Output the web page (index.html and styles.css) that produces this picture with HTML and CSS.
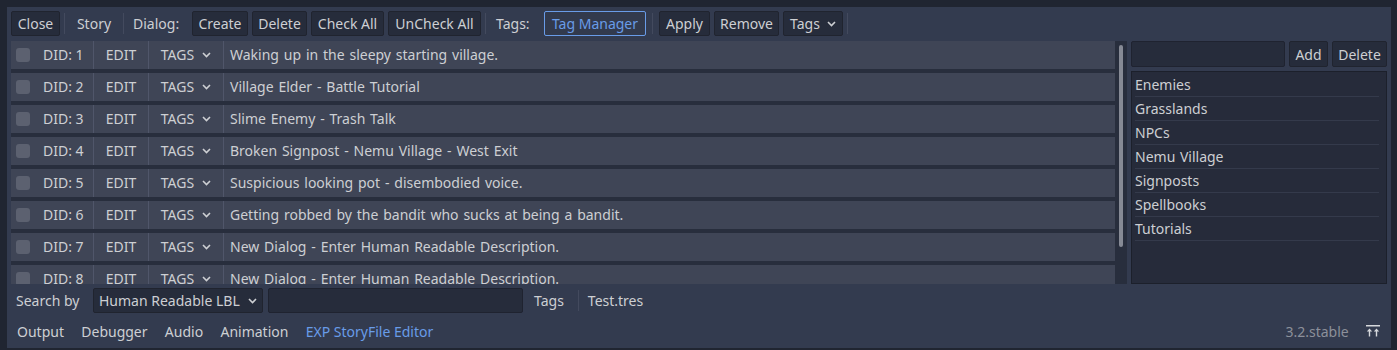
FILE: index.html
```html
<!DOCTYPE html>
<html lang="en">
<head>
    <meta charset="UTF-8">
    <title>EXP StoryFile Editor</title>
    <link rel="stylesheet" href="styles.css">
</head>
<body>
    <div class="panel">
        <div class="toolbar">
            <span class="btn btn-close">Close</span>
            <span class="vsep"></span>
            <span class="flat">Story</span>
            <span class="vsep"></span>
            <span class="lbl lbl-dialog">Dialog:</span>
            <span class="btn btn-create">Create</span>
            <span class="btn btn-delete">Delete</span>
            <span class="btn btn-check">Check All</span>
            <span class="btn btn-uncheck">UnCheck All</span>
            <span class="vsep"></span>
            <span class="lbl lbl-tags">Tags:</span>
            <span class="btn btn-manager active">Tag Manager</span>
            <span class="vsep vsep-wide"></span>
            <span class="btn btn-apply">Apply</span>
            <span class="btn btn-remove">Remove</span>
            <span class="btn btn-tags">Tags <svg class="chev" width="9" height="6" viewBox="0 0 9 6"><path d="M1 1 L4.5 4.5 L8 1"/></svg></span>
            <span class="vsep"></span>
        </div>

        <div class="main">
            <div class="list">
                <div class="rows">
                    <div class="row">
                        <div class="c-id"><span class="check"></span>DID: 1</div>
                        <div class="c-edit">EDIT</div>
                        <div class="c-tags">TAGS <svg class="chev" width="9" height="6" viewBox="0 0 9 6"><path d="M1 1 L4.5 4.5 L8 1"/></svg></div>
                        <div class="c-desc">Waking up in the sleepy starting village.</div>
                    </div>
                    <div class="row">
                        <div class="c-id"><span class="check"></span>DID: 2</div>
                        <div class="c-edit">EDIT</div>
                        <div class="c-tags">TAGS <svg class="chev" width="9" height="6" viewBox="0 0 9 6"><path d="M1 1 L4.5 4.5 L8 1"/></svg></div>
                        <div class="c-desc">Village Elder - Battle Tutorial</div>
                    </div>
                    <div class="row">
                        <div class="c-id"><span class="check"></span>DID: 3</div>
                        <div class="c-edit">EDIT</div>
                        <div class="c-tags">TAGS <svg class="chev" width="9" height="6" viewBox="0 0 9 6"><path d="M1 1 L4.5 4.5 L8 1"/></svg></div>
                        <div class="c-desc">Slime Enemy - Trash Talk</div>
                    </div>
                    <div class="row">
                        <div class="c-id"><span class="check"></span>DID: 4</div>
                        <div class="c-edit">EDIT</div>
                        <div class="c-tags">TAGS <svg class="chev" width="9" height="6" viewBox="0 0 9 6"><path d="M1 1 L4.5 4.5 L8 1"/></svg></div>
                        <div class="c-desc">Broken Signpost - Nemu Village - West Exit</div>
                    </div>
                    <div class="row">
                        <div class="c-id"><span class="check"></span>DID: 5</div>
                        <div class="c-edit">EDIT</div>
                        <div class="c-tags">TAGS <svg class="chev" width="9" height="6" viewBox="0 0 9 6"><path d="M1 1 L4.5 4.5 L8 1"/></svg></div>
                        <div class="c-desc">Suspicious looking pot - disembodied voice.</div>
                    </div>
                    <div class="row">
                        <div class="c-id"><span class="check"></span>DID: 6</div>
                        <div class="c-edit">EDIT</div>
                        <div class="c-tags">TAGS <svg class="chev" width="9" height="6" viewBox="0 0 9 6"><path d="M1 1 L4.5 4.5 L8 1"/></svg></div>
                        <div class="c-desc">Getting robbed by the bandit who sucks at being a bandit.</div>
                    </div>
                    <div class="row">
                        <div class="c-id"><span class="check"></span>DID: 7</div>
                        <div class="c-edit">EDIT</div>
                        <div class="c-tags">TAGS <svg class="chev" width="9" height="6" viewBox="0 0 9 6"><path d="M1 1 L4.5 4.5 L8 1"/></svg></div>
                        <div class="c-desc">New Dialog - Enter Human Readable Description.</div>
                    </div>
                    <div class="row">
                        <div class="c-id"><span class="check"></span>DID: 8</div>
                        <div class="c-edit">EDIT</div>
                        <div class="c-tags">TAGS <svg class="chev" width="9" height="6" viewBox="0 0 9 6"><path d="M1 1 L4.5 4.5 L8 1"/></svg></div>
                        <div class="c-desc">New Dialog - Enter Human Readable Description.</div>
                    </div>
                </div>
                <div class="vscroll"><div class="thumb"></div></div>
            </div>

            <div class="side">
                <div class="side-top">
                    <div class="field tag-field"></div>
                    <span class="btn btn-add">Add</span>
                    <span class="btn btn-del">Delete</span>
                </div>
                <ul class="taglist">
                    <li>Enemies</li>
                    <li>Grasslands</li>
                    <li>NPCs</li>
                    <li>Nemu Village</li>
                    <li>Signposts</li>
                    <li>Spellbooks</li>
                    <li>Tutorials</li>
                </ul>
            </div>
        </div>

        <div class="searchbar">
            <span class="search-lbl">Search by</span>
            <span class="btn select">Human Readable LBL <svg class="chev" width="9" height="6" viewBox="0 0 9 6"><path d="M1 1 L4.5 4.5 L8 1"/></svg></span>
            <div class="field search-field"></div>
            <span class="tags-lbl">Tags</span>
            <span class="vsep"></span>
            <span class="file-lbl">Test.tres</span>
        </div>

        <div class="tabs">
            <span class="tab">Output</span>
            <span class="tab">Debugger</span>
            <span class="tab">Audio</span>
            <span class="tab">Animation</span>
            <span class="tab current">EXP StoryFile Editor</span>
            <span class="version">3.2.stable</span>
            <svg class="expand" width="14" height="12" viewBox="0 0 14 12">
                <rect x="0" y="0" width="14" height="1.5"/>
                <path d="M3.5 3.5 L0.8 6.6 H2.8 V11.5 H4.2 V6.6 H6.2 Z"/>
                <path d="M10.5 3.5 L7.8 6.6 H9.8 V11.5 H11.2 V6.6 H13.2 Z"/>
            </svg>
        </div>
    </div>
</body>
</html>
```

FILE: styles.css
```css
body {
    margin: 0;
    background-color: #202531;
    font-family: "Noto Sans", sans-serif;
    font-size: 14px;
    color: #cdcfd3;
}
.panel {
    margin: 7px 6px 0 7px;
    height: 341px;
    box-sizing: border-box;
    padding: 4px;
    background-color: #333b4f;
    display: flex;
    flex-direction: column;
}

/* top toolbar */
.toolbar {
    display: flex;
    gap: 4px;
    height: 25px;
}
.btn {
    display: flex;
    align-items: center;
    box-sizing: border-box;
    padding: 0 6px;
    background-color: #262c3b;
    border: 1px solid #20242f;
    border-radius: 2px;
    white-space: nowrap;
}
.toolbar .btn {
    justify-content: center;
}
.btn.active {
    background-color: #323a4d;
    border-color: #699ce8;
    color: #699ce8;
}
.btn-close { width: 49px; }
.btn-create { width: 56px; }
.btn-delete { width: 55px; }
.btn-check { width: 73px; }
.btn-uncheck { width: 93px; }
.btn-manager { width: 102px; }
.btn-apply { width: 51px; }
.btn-remove { width: 65px; }
.toolbar .btn-tags {
    width: 60px;
    justify-content: space-between;
}
.flat {
    display: flex;
    align-items: center;
    justify-content: center;
    width: 50px;
}
.lbl {
    display: flex;
    align-items: center;
    box-sizing: border-box;
    padding-left: 5px;
}
.lbl-dialog { width: 60px; }
.lbl-tags { width: 50px; padding-left: 6px; }
.vsep {
    width: 1px;
    margin: 2px 0;
    background-color: #434a5e;
}
.vsep-wide {
    margin: 2px;
}
.chev {
    fill: none;
    stroke: #cdcfd3;
    stroke-width: 1.6;
    margin-left: 6px;
}

/* dialog list */
.main {
    display: flex;
    gap: 4px;
    height: 243px;
    margin-top: 5px;
}
.list {
    display: flex;
    width: 1116px;
    background-color: #282e3d;
    overflow: hidden;
}
.rows {
    width: 1104px;
    overflow: hidden;
}
.row {
    display: flex;
    height: 28px;
    margin-bottom: 4px;
    background-color: #3f4556;
}
.row > div {
    display: flex;
    align-items: center;
    padding-bottom: 1px;
    border-right: 1px solid #50566a;
    white-space: nowrap;
}
.c-id {
    width: 77px;
    padding-left: 5px;
}
.check {
    width: 14px;
    height: 14px;
    margin: 1px 13px 0 0;
    border-radius: 3px;
    background-color: #5c6170;
}
.c-edit {
    width: 54px;
    justify-content: center;
}
.c-tags {
    width: 74px;
    justify-content: center;
}
.c-tags .chev {
    margin-left: 8px;
}
.row > .c-desc {
    flex: 1;
    padding-left: 6px;
    border-right: none;
    word-spacing: 1.2px;
}
.vscroll {
    width: 4px;
    padding: 4px;
}
.thumb {
    height: 202px;
    border-radius: 2px;
    background-color: #868a95;
}

/* tag manager side */
.side {
    width: 256px;
    display: flex;
    flex-direction: column;
    gap: 4px;
}
.side-top {
    display: flex;
    gap: 4px;
    height: 26px;
}
.field {
    box-sizing: border-box;
    background-color: #262c3b;
    border: 1px solid #1f2330;
    border-radius: 2px;
}
.tag-field {
    flex: 1;
}
.btn-add { width: 39px; justify-content: center; }
.btn-del { width: 55px; justify-content: center; }
.taglist {
    flex: 1;
    margin: 0;
    padding: 1px 7px 0 3px;
    list-style: none;
    background-color: #262b3a;
    border: 1px solid #1c202b;
}
.taglist li {
    height: 23px;
    line-height: 23px;
    border-bottom: 1px solid #343a4b;
    word-spacing: 1px;
}

/* search bar */
.searchbar {
    display: flex;
    align-items: stretch;
    height: 25px;
    margin-top: 4px;
}
.search-lbl {
    display: flex;
    align-items: center;
    padding-left: 5px;
    width: 77px;
}
.select {
    width: 170px;
    padding: 0 5px;
    justify-content: space-between;
}
.search-field {
    width: 255px;
    margin-left: 5px;
}
.tags-lbl {
    display: flex;
    align-items: center;
    padding: 0 14px 0 11px;
}
.file-lbl {
    display: flex;
    align-items: center;
    padding-left: 9px;
}

/* bottom tabs */
.tabs {
    flex: 1;
    display: flex;
    align-items: center;
    padding: 5px 7px 0 6px;
    gap: 17.3px;
}
.tab.current {
    color: #699ce8;
}
.version {
    margin-left: auto;
    color: #8c909a;
}
.expand {
    fill: #d6d8dc;
}
```
